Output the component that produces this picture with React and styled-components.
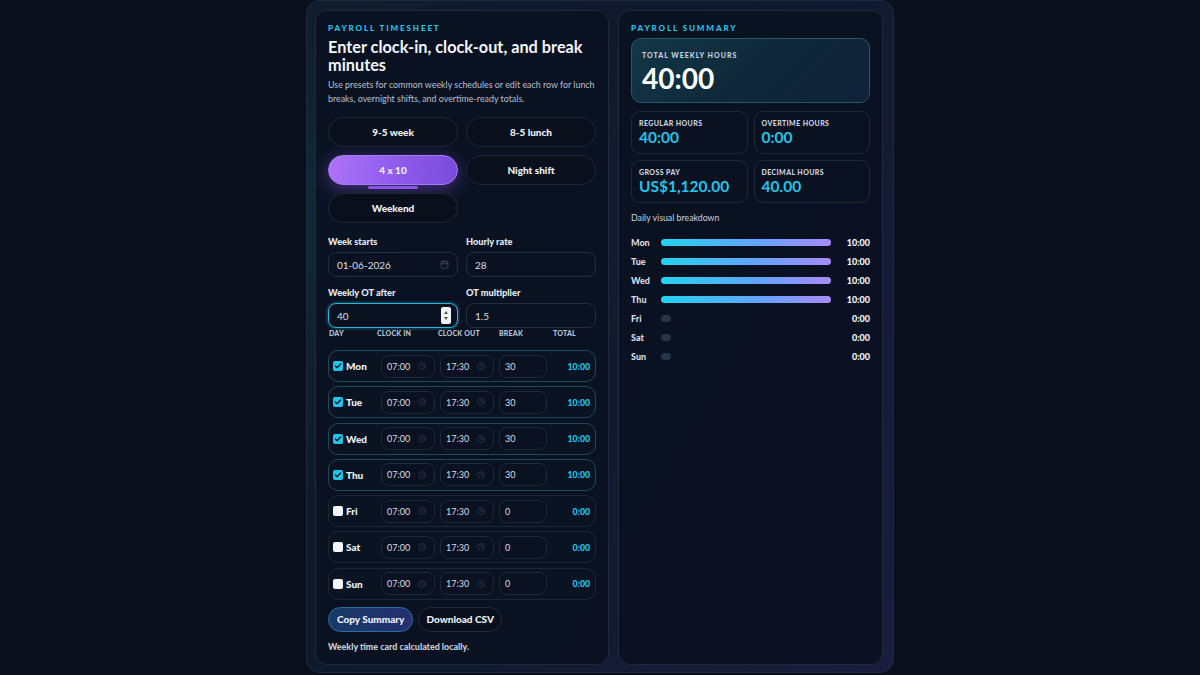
import React, { useState } from 'react'
import styled, { createGlobalStyle, css } from 'styled-components'
import { Clock, Calendar, Check } from 'lucide-react'

const GlobalStyle = createGlobalStyle`
    * { box-sizing: border-box; }
    body {
        margin: 0;
        background: #0b0e1b;
        font-family: Lato, "Noto Sans", sans-serif;
        color: #e6ecf5;
    }
`

const Page = styled.div`
    display: flex;
    justify-content: center;
    min-height: 675px;
`
const Shell = styled.div`
    width: 588px;
    height: 673px;
    padding: 9px 10px 9px 8px;
    display: grid;
    grid-template-columns: 294px 1fr;
    gap: 9px;
    border-radius: 14px;
    border: 1px solid #1e2944;
    background:
        radial-gradient(ellipse at 0% 30%, rgba(30, 110, 120, 0.18), transparent 45%),
        linear-gradient(120deg, #0e1828 0%, #101a2e 55%, #1a1d3e 100%);
`
const Panel = styled.section`
    min-width: 0;
    border-radius: 12px;
    border: 1px solid #1c2a3c;
    background: rgba(10, 16, 31, 0.84);
    padding: 12px;
    display: flex;
    flex-direction: column;
`
const Eyebrow = styled.div`
    font-size: 8px;
    font-weight: 900;
    letter-spacing: 1.9px;
    color: #22c5e8;
    line-height: 10px;
    text-transform: uppercase;
`
const Heading = styled.h1`
    margin: 5px 0 0 0;
    font-size: 16.3px;
    line-height: 18px;
    font-weight: 700;
    color: #f3f6fb;
`
const Desc = styled.p`
    margin: 4px 0 0 0;
    font-size: 8.9px;
    line-height: 14px;
    color: #b6c0d0;
`
const Presets = styled.div`
    margin-top: 11px;
    display: grid;
    grid-template-columns: 1fr 1fr;
    gap: 8px;
`
const PresetButton = styled.button`
    position: relative;
    height: 30px;
    border-radius: 999px;
    font-family: inherit;
    font-size: 10px;
    font-weight: 900;
    color: #eef2f8;
    border: 1px solid #1d2737;
    background: #0a0f1c;
    cursor: pointer;
    ${({ $active }) => $active && css`
        border-color: #a77af5;
        background: linear-gradient(95deg, #ad72f8 0%, #8b58ea 60%, #7a4cdc 100%);
        box-shadow: 0 4px 18px rgba(140, 90, 240, 0.45);
        &::after {
            content: '';
            position: absolute;
            left: 50%;
            bottom: -5px;
            width: 50px;
            height: 3px;
            margin-left: -25px;
            border-radius: 3px;
            background: #8a55e8;
        }
    `}
`
const FieldGrid = styled.div`
    margin-top: 13px;
    display: grid;
    grid-template-columns: minmax(0, 1fr) minmax(0, 1fr);
    column-gap: 8px;
    row-gap: 10px;
`
const Field = styled.label`
    min-width: 0;
    display: flex;
    flex-direction: column;
    gap: 5px;
`
const FieldLabel = styled.span`
    font-size: 9.2px;
    line-height: 11px;
    font-weight: 900;
    color: #e3e9f2;
`
const InputWrap = styled.div`
    position: relative;
    height: 25px;
    border-radius: 8px;
    border: 1px solid ${({ $focus }) => ($focus ? '#2fb6d8' : '#222e40')};
    background: #0a1120;
    box-shadow: ${({ $focus }) => ($focus ? '0 0 0 2px rgba(34, 197, 232, 0.18)' : 'none')};
    display: flex;
    align-items: center;
    padding: 0 8px;
`
const Input = styled.input`
    flex: 1;
    min-width: 0;
    width: 100%;
    border: none;
    outline: none;
    background: transparent;
    font-family: inherit;
    font-size: 10px;
    color: #d8dfe9;
    padding: 0;
`
const Spinner = styled.div`
    position: absolute;
    right: 6px;
    top: 3px;
    width: 10px;
    height: 17px;
    border-radius: 2px;
    background: #f1f3f6;
    display: flex;
    flex-direction: column;
    align-items: center;
    justify-content: space-around;
    padding: 2px 0;
    &::before, &::after {
        content: '';
        width: 0;
        height: 0;
        border-left: 2.5px solid transparent;
        border-right: 2.5px solid transparent;
    }
    &::before { border-bottom: 3px solid #555; }
    &::after { border-top: 3px solid #555; }
`
const TableHead = styled.div`
    margin-top: 1px;
    display: grid;
    grid-template-columns: 48px 61px 61px 54px 1fr;
    padding-left: 1px;
    font-size: 7px;
    line-height: 9px;
    font-weight: 900;
    color: #b9c4d4;
    letter-spacing: 0.2px;
`
const Rows = styled.div`
    margin-top: 12px;
    display: flex;
    flex-direction: column;
    gap: 4.3px;
`
const Row = styled.div`
    height: 32px;
    border-radius: 10px;
    border: 1px solid ${({ $on }) => ($on ? '#1d4a5e' : '#1c2737')};
    background: #0a1322;
    display: grid;
    grid-template-columns: 43px 54px 54px 48px 1fr;
    column-gap: 5px;
    align-items: center;
    padding: 0 5px 0 4px;
`
const DayCell = styled.div`
    display: flex;
    align-items: center;
    gap: 3px;
    font-size: 10px;
    font-weight: 900;
    color: #eef2f8;
`
const Box = styled.span`
    flex: none;
    width: 10px;
    height: 10px;
    border-radius: 2px;
    background: ${({ $on }) => ($on ? '#22c5e8' : '#f4f6f9')};
    display: inline-flex;
    align-items: center;
    justify-content: center;
`
const TimeBox = styled.div`
    height: 23px;
    border-radius: 8px;
    border: 1px solid #1d2838;
    background: #0a1120;
    display: flex;
    align-items: center;
    justify-content: space-between;
    padding: 0 8px 0 5px;
    font-size: 9px;
    color: #d6dde8;
`
const RowTotal = styled.div`
    text-align: right;
    font-size: 8.7px;
    font-weight: 900;
    color: #22c5e8;
`
const Actions = styled.div`
    margin-top: 7px;
    display: flex;
    gap: 5px;
`
const ActionButton = styled.button`
    height: 25px;
    padding: 0 ${({ $primary }) => ($primary ? '8px' : '7px')};
    border-radius: 999px;
    font-family: inherit;
    font-size: 10px;
    font-weight: 900;
    color: #eef2f8;
    cursor: pointer;
    border: 1px solid ${({ $primary }) => ($primary ? '#2a6fa0' : '#202b3c')};
    background: ${({ $primary }) => ($primary ? 'linear-gradient(90deg, #173a66, #262f72)' : '#0a0f1c')};
`
const Note = styled.div`
    margin-top: 9px;
    font-size: 8.9px;
    font-weight: 900;
    color: #c5cdd9;
`
const TotalCard = styled.div`
    margin-top: 5px;
    height: 65px;
    border-radius: 10px;
    border: 1px solid #22596a;
    background: linear-gradient(135deg, #123747 0%, #0f2738 55%, #10223a 100%);
    padding: 12px 10px 0 10px;
`
const CardLabel = styled.div`
    font-size: 7px;
    line-height: 9px;
    font-weight: 900;
    letter-spacing: ${({ $wide }) => ($wide ? '1px' : '0.4px')};
    color: #c9d3e0;
    text-transform: uppercase;
`
const BigValue = styled.div`
    margin-top: 2px;
    font-size: 28px;
    line-height: 32px;
    font-weight: 700;
    color: #ffffff;
`
const StatGrid = styled.div`
    margin-top: 8px;
    display: grid;
    grid-template-columns: 1fr 1fr;
    gap: 6px;
`
const StatCard = styled.div`
    height: 43px;
    border-radius: 9px;
    border: 1px solid #1d2939;
    background: #0a1120;
    padding: 7px 7px 0 7px;
`
const StatValue = styled.div`
    font-size: 15.5px;
    line-height: 19px;
    font-weight: 700;
    color: #22c5e8;
`
const SubTitle = styled.div`
    margin-top: 9px;
    font-size: 8.8px;
    line-height: 12px;
    color: #c9d2df;
`
const Bars = styled.div`
    margin-top: 12px;
    display: flex;
    flex-direction: column;
    gap: 7px;
`
const BarRow = styled.div`
    display: grid;
    grid-template-columns: 30px 170px 1fr;
    align-items: center;
    height: 12px;
`
const BarDay = styled.span`
    font-size: 9px;
    font-weight: 900;
    color: #d5dce7;
`
const Fill = styled.div`
    height: 7px;
    border-radius: 4px;
    background: ${({ $empty }) => ($empty ? '#25364c' : 'linear-gradient(90deg, #22d3ee 0%, #60a5fa 55%, #a78bfa 100%)')};
`
const BarValue = styled.span`
    text-align: right;
    font-size: 9px;
    font-weight: 900;
    color: #f3f6fb;
`

const presets = ['9-5 week', '8-5 lunch', '4 x 10', 'Night shift', 'Weekend']

const days = [
    { day: 'Mon', on: true, brk: '30', total: '10:00' },
    { day: 'Tue', on: true, brk: '30', total: '10:00' },
    { day: 'Wed', on: true, brk: '30', total: '10:00' },
    { day: 'Thu', on: true, brk: '30', total: '10:00' },
    { day: 'Fri', on: false, brk: '0', total: '0:00' },
    { day: 'Sat', on: false, brk: '0', total: '0:00' },
    { day: 'Sun', on: false, brk: '0', total: '0:00' },
]

const App = () => {
    const [active, setActive] = useState('4 x 10')

    return (
        <Page>
            <GlobalStyle />
            <Shell>
                <Panel>
                    <Eyebrow>Payroll timesheet</Eyebrow>
                    <Heading>Enter clock-in, clock-out, and break minutes</Heading>
                    <Desc>Use presets for common weekly schedules or edit each row for lunch breaks, overnight shifts, and overtime-ready totals.</Desc>
                    <Presets>
                        {presets.map(p => (
                            <PresetButton key={p} $active={p === active} onClick={() => setActive(p)}>{p}</PresetButton>
                        ))}
                    </Presets>
                    <FieldGrid>
                        <Field>
                            <FieldLabel>Week starts</FieldLabel>
                            <InputWrap>
                                <Input defaultValue="01-06-2026" />
                                <Calendar size={9} color="#3b4759" strokeWidth={2.5} />
                            </InputWrap>
                        </Field>
                        <Field>
                            <FieldLabel>Hourly rate</FieldLabel>
                            <InputWrap>
                                <Input defaultValue="28" />
                            </InputWrap>
                        </Field>
                        <Field>
                            <FieldLabel>Weekly OT after</FieldLabel>
                            <InputWrap $focus>
                                <Input defaultValue="40" />
                                <Spinner />
                            </InputWrap>
                        </Field>
                        <Field>
                            <FieldLabel>OT multiplier</FieldLabel>
                            <InputWrap>
                                <Input defaultValue="1.5" />
                            </InputWrap>
                        </Field>
                    </FieldGrid>
                    <TableHead>
                        <span>DAY</span>
                        <span>CLOCK IN</span>
                        <span>CLOCK OUT</span>
                        <span>BREAK</span>
                        <span>TOTAL</span>
                    </TableHead>
                    <Rows>
                        {days.map(d => (
                            <Row key={d.day} $on={d.on}>
                                <DayCell>
                                    <Box $on={d.on}>{d.on && <Check size={8} color="#0a1a28" strokeWidth={4} />}</Box>
                                    {d.day}
                                </DayCell>
                                <TimeBox>07:00 <Clock size={8} color="#2d3a4c" strokeWidth={2.5} /></TimeBox>
                                <TimeBox>17:30 <Clock size={8} color="#2d3a4c" strokeWidth={2.5} /></TimeBox>
                                <TimeBox>{d.brk}</TimeBox>
                                <RowTotal>{d.total}</RowTotal>
                            </Row>
                        ))}
                    </Rows>
                    <Actions>
                        <ActionButton $primary>Copy Summary</ActionButton>
                        <ActionButton>Download CSV</ActionButton>
                    </Actions>
                    <Note>Weekly time card calculated locally.</Note>
                </Panel>
                <Panel>
                    <Eyebrow>Payroll summary</Eyebrow>
                    <TotalCard>
                        <CardLabel $wide>Total weekly hours</CardLabel>
                        <BigValue>40:00</BigValue>
                    </TotalCard>
                    <StatGrid>
                        <StatCard>
                            <CardLabel>Regular hours</CardLabel>
                            <StatValue>40:00</StatValue>
                        </StatCard>
                        <StatCard>
                            <CardLabel>Overtime hours</CardLabel>
                            <StatValue>0:00</StatValue>
                        </StatCard>
                        <StatCard>
                            <CardLabel>Gross pay</CardLabel>
                            <StatValue>US$1,120.00</StatValue>
                        </StatCard>
                        <StatCard>
                            <CardLabel>Decimal hours</CardLabel>
                            <StatValue>40.00</StatValue>
                        </StatCard>
                    </StatGrid>
                    <SubTitle>Daily visual breakdown</SubTitle>
                    <Bars>
                        {days.map(d => (
                            <BarRow key={d.day}>
                                <BarDay>{d.day}</BarDay>
                                <Fill $empty={!d.on} style={{ width: d.on ? '100%' : '10px' }} />
                                <BarValue>{d.total}</BarValue>
                            </BarRow>
                        ))}
                    </Bars>
                </Panel>
            </Shell>
        </Page>
    )
}

export default App
